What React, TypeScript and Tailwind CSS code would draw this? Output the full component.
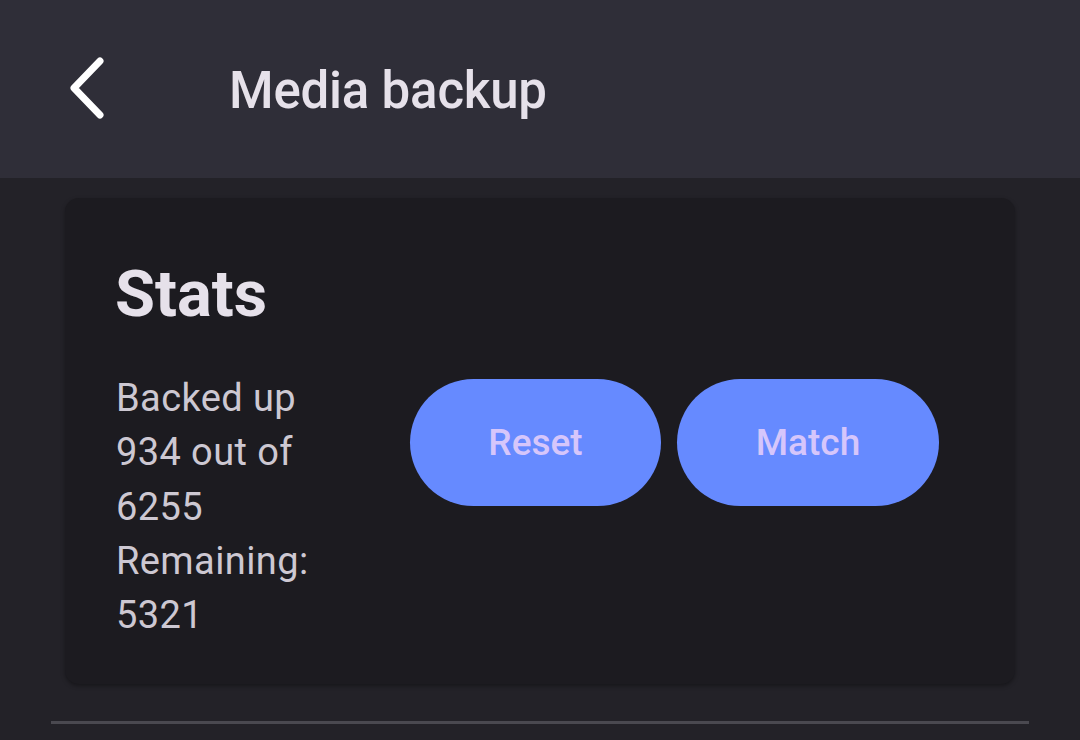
export default function App() {
  return (
    <div
      className="w-[1080px] h-[740px] overflow-hidden bg-[#232228] flex flex-col"
      style={{ fontFamily: "Roboto, 'Noto Sans', sans-serif" }}
    >
      <header className="h-[178px] shrink-0 bg-[#2f2e38] flex items-center">
        <button className="ml-[68px] w-[36px] h-[64px] flex items-center justify-center">
          <svg width="36" height="64" viewBox="0 0 36 64" fill="none">
            <path
              d="M32 4 L6 31 L32 58"
              stroke="#ffffff"
              strokeWidth="7"
              strokeLinecap="round"
              strokeLinejoin="round"
            />
          </svg>
        </button>
        <h1 className="ml-[125px] text-[51px] font-medium text-[#e6e1ea] tracking-[-0.2px] leading-none mt-[2px]">
          Media backup
        </h1>
      </header>

      <main className="flex flex-col px-[51px] pt-[20px]">
        <section className="mx-[14px] h-[486px] rounded-[14px] bg-[#1c1b20] shadow-[0_2px_4px_rgba(0,0,0,0.35)] px-[51px] pt-[64px]">
          <h2 className="text-[65px] font-bold text-[#e6e1ea] leading-none -ml-[1px]">Stats</h2>
          <div className="mt-[50px] flex items-start">
            <div className="w-[240px] text-[38px] tracking-[0.4px] leading-[54.3px] text-[#cdc8d2] -mt-[6px]">
              <p>Backed up 934 out of 6255</p>
              <p>Remaining: 5321</p>
            </div>
            <div className="ml-[54px] flex gap-[16px] mt-[2px]">
              <button className="w-[251px] h-[127px] rounded-full bg-[#668aff] text-[#d6c6fb] text-[37px] font-medium">
                Reset
              </button>
              <button className="w-[262px] h-[127px] rounded-full bg-[#668aff] text-[#d6c6fb] text-[37px] font-medium">
                Match
              </button>
            </div>
          </div>
        </section>
        <div className="mt-[37px] h-[3px] bg-[#4a4950]" />
      </main>
    </div>
  )
}
